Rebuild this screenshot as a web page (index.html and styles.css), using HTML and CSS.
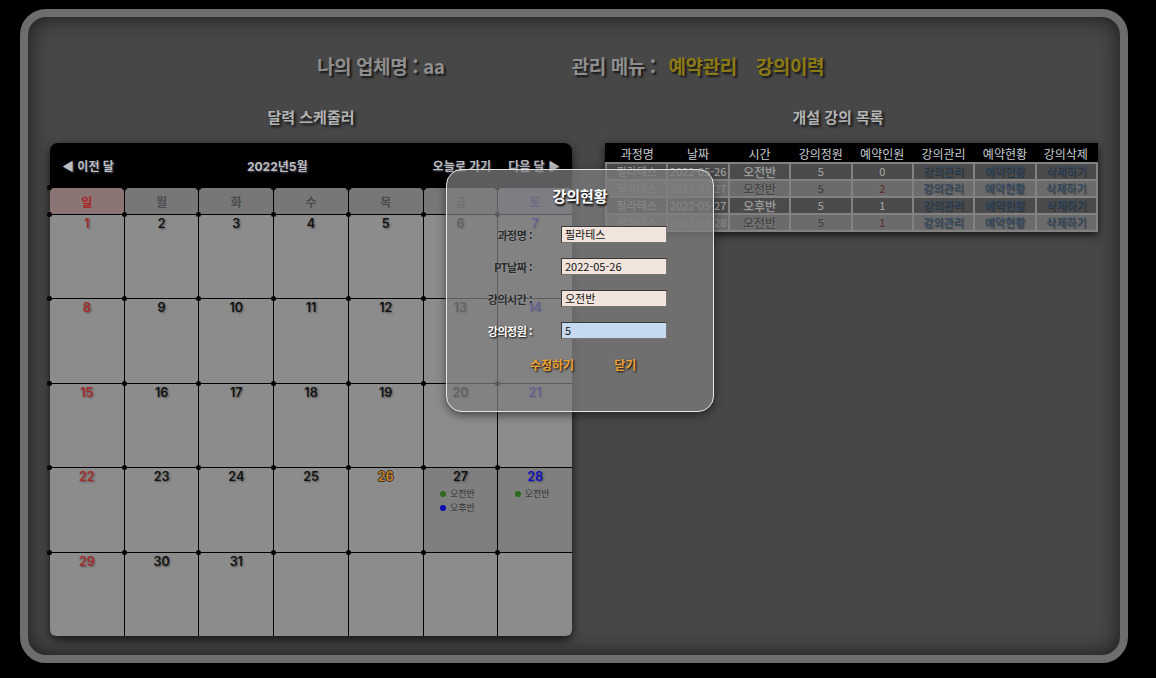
FILE: index.html
```html
<!DOCTYPE html>
<html lang="ko">
<head>
<meta charset="utf-8">
<title>강의현황</title>
<link rel="stylesheet" href="styles.css">
</head>
<body>
<div class="frame">
  <div class="topbar">
    <div class="company">나의 업체명 : aa</div>
    <div class="menu">관리 메뉴 : <a class="mlink">예약관리</a><a class="mlink">강의이력</a></div>
  </div>
  <div class="columns">
    <section class="left">
      <h2 class="sec-title">달력 스케줄러</h2>
      <div class="cal">
        <div class="cal-head">
          <span class="nav">◀ 이전 달</span>
          <span class="month">2022년5월</span>
          <span class="nav-right"><span class="nav">오늘로 가기</span><span class="nav">다음 달 ▶</span></span>
        </div>
        <div class="grid">
          <div class="dn sun">일</div><div class="dn">월</div><div class="dn">화</div><div class="dn">수</div><div class="dn">목</div><div class="dn">금</div><div class="dn sat">토</div>
          <div class="cell"><span class="num sun">1</span></div>
          <div class="cell"><span class="num">2</span></div>
          <div class="cell"><span class="num">3</span></div>
          <div class="cell"><span class="num">4</span></div>
          <div class="cell"><span class="num">5</span></div>
          <div class="cell"><span class="num">6</span></div>
          <div class="cell"><span class="num sat">7</span></div>
          <div class="cell"><span class="num sun">8</span></div>
          <div class="cell"><span class="num">9</span></div>
          <div class="cell"><span class="num">10</span></div>
          <div class="cell"><span class="num">11</span></div>
          <div class="cell"><span class="num">12</span></div>
          <div class="cell"><span class="num">13</span></div>
          <div class="cell"><span class="num sat">14</span></div>
          <div class="cell"><span class="num sun">15</span></div>
          <div class="cell"><span class="num">16</span></div>
          <div class="cell"><span class="num">17</span></div>
          <div class="cell"><span class="num">18</span></div>
          <div class="cell"><span class="num">19</span></div>
          <div class="cell"><span class="num">20</span></div>
          <div class="cell"><span class="num sat">21</span></div>
          <div class="cell"><span class="num sun">22</span></div>
          <div class="cell"><span class="num">23</span></div>
          <div class="cell"><span class="num">24</span></div>
          <div class="cell"><span class="num">25</span></div>
          <div class="cell"><span class="num today">26</span></div>
          <div class="cell busy"><span class="num">27</span>
            <ul class="events"><li><i class="dot am"></i>오전반</li><li><i class="dot pm"></i>오후반</li></ul>
          </div>
          <div class="cell busy"><span class="num sat">28</span>
            <ul class="events"><li><i class="dot am"></i>오전반</li></ul>
          </div>
          <div class="cell"><span class="num sun">29</span></div>
          <div class="cell"><span class="num">30</span></div>
          <div class="cell"><span class="num">31</span></div>
          <div class="cell"></div>
          <div class="cell"></div>
          <div class="cell"></div>
          <div class="cell"></div>
        </div>
      </div>
    </section>
    <section class="right">
      <h2 class="sec-title tt">개설 강의 목록</h2>
      <table class="list">
        <thead>
          <tr><th>과정명</th><th>날짜</th><th>시간</th><th>강의정원</th><th>예약인원</th><th>강의관리</th><th>예약현황</th><th>강의삭제</th></tr>
        </thead>
        <tbody>
          <tr class="odd"><td class="c">필라테스</td><td class="c">2022-05-26</td><td class="t">오전반</td><td>5</td><td>0</td><td class="lk">강의관리</td><td class="lk">예약현황</td><td class="lk">삭제하기</td></tr>
          <tr class="even"><td class="c">필라테스</td><td class="c">2022-05-27</td><td class="t">오전반</td><td>5</td><td class="r">2</td><td class="lk">강의관리</td><td class="lk">예약현황</td><td class="lk">삭제하기</td></tr>
          <tr class="odd"><td class="c">필라테스</td><td class="c">2022-05-27</td><td class="t">오후반</td><td>5</td><td>1</td><td class="lk">강의관리</td><td class="lk">예약현황</td><td class="lk">삭제하기</td></tr>
          <tr class="even"><td class="c">필라테스</td><td class="c">2022-05-28</td><td class="t">오전반</td><td>5</td><td class="r">1</td><td class="lk">강의관리</td><td class="lk">예약현황</td><td class="lk">삭제하기</td></tr>
        </tbody>
      </table>
    </section>
  </div>
  <div class="modal">
    <h3 class="m-title">강의현황</h3>
    <div class="form">
      <label class="lb">과정명 :</label><div class="inp">필라테스</div>
      <label class="lb">PT날짜 :</label><div class="inp">2022-05-26</div>
      <label class="lb">강의시간 :</label><div class="inp">오전반</div>
      <label class="lb focus">강의정원 :</label><div class="inp active">5</div>
    </div>
    <div class="btns"><span class="btn">수정하기</span><span class="btn">닫기</span></div>
  </div>
</div>
</body>
</html>
```

FILE: styles.css
```css
* { box-sizing: border-box; }
html, body { margin: 0; padding: 0; }
body {
  background: #000;
  padding: 9px 28px 15px 20px;
  font-family: "Noto Sans CJK KR", "Noto Sans", sans-serif;
}
.frame {
  position: relative;
  width: 1108px;
  height: 654px;
  border: 8px solid #6d6d6d;
  border-radius: 26px;
  background: #474747;
  box-shadow: inset 0 0 22px rgba(0,0,0,0.65);
  padding: 37px 0 0 22px;
}
.topbar {
  display: flex;
  justify-content: center;
  gap: 127px;
  font-size: 19px;
  font-weight: 700;
  line-height: 24px;
  color: #8e8e8e;
  text-shadow: 2px 2px 2px rgba(0,0,0,0.7);
  padding-right: 29px;
  letter-spacing: -0.4px;
}
.mlink { color: #8c7a12; margin-left: 8px; }
.mlink + .mlink { margin-left: 19px; }
.columns {
  display: flex;
  gap: 33px;
  margin-top: 28px;
}
.sec-title {
  margin: 0 0 15px;
  font-size: 15px;
  line-height: 22px;
  font-weight: 700;
  text-align: center;
  color: #b3b3b3;
  text-shadow: 2px 2px 3px rgba(0,0,0,0.85);
}
.left { width: 522px; }
.right { width: 493px; }
.tt { padding-right: 27px; }
.cal {
  width: 522px;
  border-radius: 8px;
  background: #000;
  box-shadow: 0 4px 10px rgba(0,0,0,0.7);
}
.cal-head {
  height: 45px;
  display: flex;
  justify-content: space-between;
  align-items: center;
  padding: 0 12px;
  font-size: 12px;
  font-weight: 700;
  color: #bdbdbd;
  text-shadow: 1px 1px 2px rgba(120,120,160,0.6);
}
.nav-right { display: flex; gap: 17px; }
.month { font-family: "Inter", "Noto Sans CJK KR", sans-serif; font-weight: 700; padding-left: 8px; }
.grid {
  display: grid;
  grid-template-columns: repeat(7, 1fr);
  grid-template-rows: 26px repeat(5, 1fr);
  gap: 1px;
  height: 448px;
  background: #000;
  border-radius: 0 0 6px 6px;
}
.dn, .cell { position: relative; }
.dn::after, .cell::after {
  content: "";
  position: absolute;
  left: -3px;
  top: -3px;
  width: 5px;
  height: 5px;
  border-radius: 50%;
  background: #000;
}
.dn {
  background: #777;
  border-radius: 4px 4px 0 0;
  display: flex;
  align-items: center;
  justify-content: center;
  font-size: 12px;
  font-weight: 700;
  color: #4c4c4c;
}
.dn.sun { background: #8b7474; color: #a82222; }
.dn.sat { background: #7a7a8c; color: #3838a0; }
.cell {
  background: #8c8c8c;
  text-align: center;
  padding-top: 1px;
}
.cell:nth-last-child(7) { border-bottom-left-radius: 6px; }
.cell:last-child { border-bottom-right-radius: 6px; }
.cell.busy { background: #7f7f7f; }
.num {
  display: block;
  font-family: "Inter", sans-serif;
  font-size: 12.5px;
  font-weight: 600;
  line-height: 16px;
  color: #111;
  text-shadow: 1px 1px 2px rgba(0,0,0,0.45);
}
.num.sun { color: #a62a2a; }
.num.sat { color: #1010c8; }
.num.today {
  color: #c98022;
  text-shadow: -1px 0 #333, 1px 0 #333, 0 -1px #333, 0 1px #333;
}
.events {
  list-style: none;
  margin: 2px 0 0;
  padding: 0;
  font-size: 9px;
  line-height: 14px;
  color: #333;
}
.events li { display: flex; justify-content: center; align-items: center; gap: 4px; padding-right: 6px; }
.dot { display: inline-block; width: 6px; height: 6px; border-radius: 50%; }
.dot.am { background: #2f6a1f; }
.dot.pm { background: #0a0ab0; }
.list {
  width: 493px;
  table-layout: fixed;
  border-collapse: collapse;
  background: #000;
  border: 2px solid #000;
  box-shadow: 0 3px 8px rgba(0,0,0,0.7);
  font-size: 11px;
  text-align: center;
}
.list th {
  height: 19px;
  padding: 0;
  font-size: 12px;
  font-weight: 400;
  color: #c7ccd2;
}
.list td {
  height: 17px;
  padding: 0;
  border: 2px solid #828282;
  line-height: 13px;
}
.list tr.odd td { background: #4b4b4b; color: #a8a8a8; }
.list tr.even td { background: #6b6b6b; color: #3a3a3a; }
.list td.c { color: #8e8e8e; }
.list tr.even td.c { color: #8e8e8e; }
.list td.t { color: #1a1a1a; text-shadow: 1px 1px 1px rgba(255,255,255,0.15); font-size: 12px; }
.list tr.even td.r { color: #5a2626; }
.list td.lk, .list tr.even td.lk, .list tr.odd td.lk { color: #2c4a68; text-shadow: 1px 1px 1px rgba(0,0,0,0.5); }
.modal {
  position: absolute;
  left: 418px;
  top: 152px;
  width: 268px;
  height: 243px;
  background: rgba(126,126,126,0.73);
  border: 1.5px solid #e4e4e4;
  border-radius: 16px;
  box-shadow: 0 3px 10px rgba(0,0,0,0.5);
  padding-top: 15px;
}
.m-title {
  margin: 0;
  text-align: center;
  font-size: 15px;
  line-height: 22px;
  font-weight: 700;
  color: #fff;
  text-shadow: 1px 2px 2px #000;
}
.form {
  display: grid;
  grid-template-columns: 85px 106px;
  column-gap: 29px;
  row-gap: 15px;
  margin-top: 19px;
  align-items: center;
}
.lb {
  text-align: right;
  font-size: 11px;
  font-weight: 700;
  color: #2a2a2a;
  text-shadow: 0 0 2px rgba(255,255,255,0.35);
  letter-spacing: -0.5px;
}
.lb.focus { color: #fff; text-shadow: 1px 1px 2px #000; }
.inp {
  height: 17px;
  background: #f1e4dc;
  border: 1px solid #3a3a3a;
  border-right-color: #777;
  border-bottom-color: #777;
  font-size: 11px;
  line-height: 15px;
  padding-left: 3px;
  color: #111;
}
.inp.active { background: #c5d9ef; }
.btns {
  display: flex;
  gap: 40px;
  margin-top: 17px;
  padding-left: 83px;
}
.btn {
  font-size: 12px;
  font-weight: 700;
  color: #f0a232;
  text-shadow: 1px 1px 2px #000;
}
```
